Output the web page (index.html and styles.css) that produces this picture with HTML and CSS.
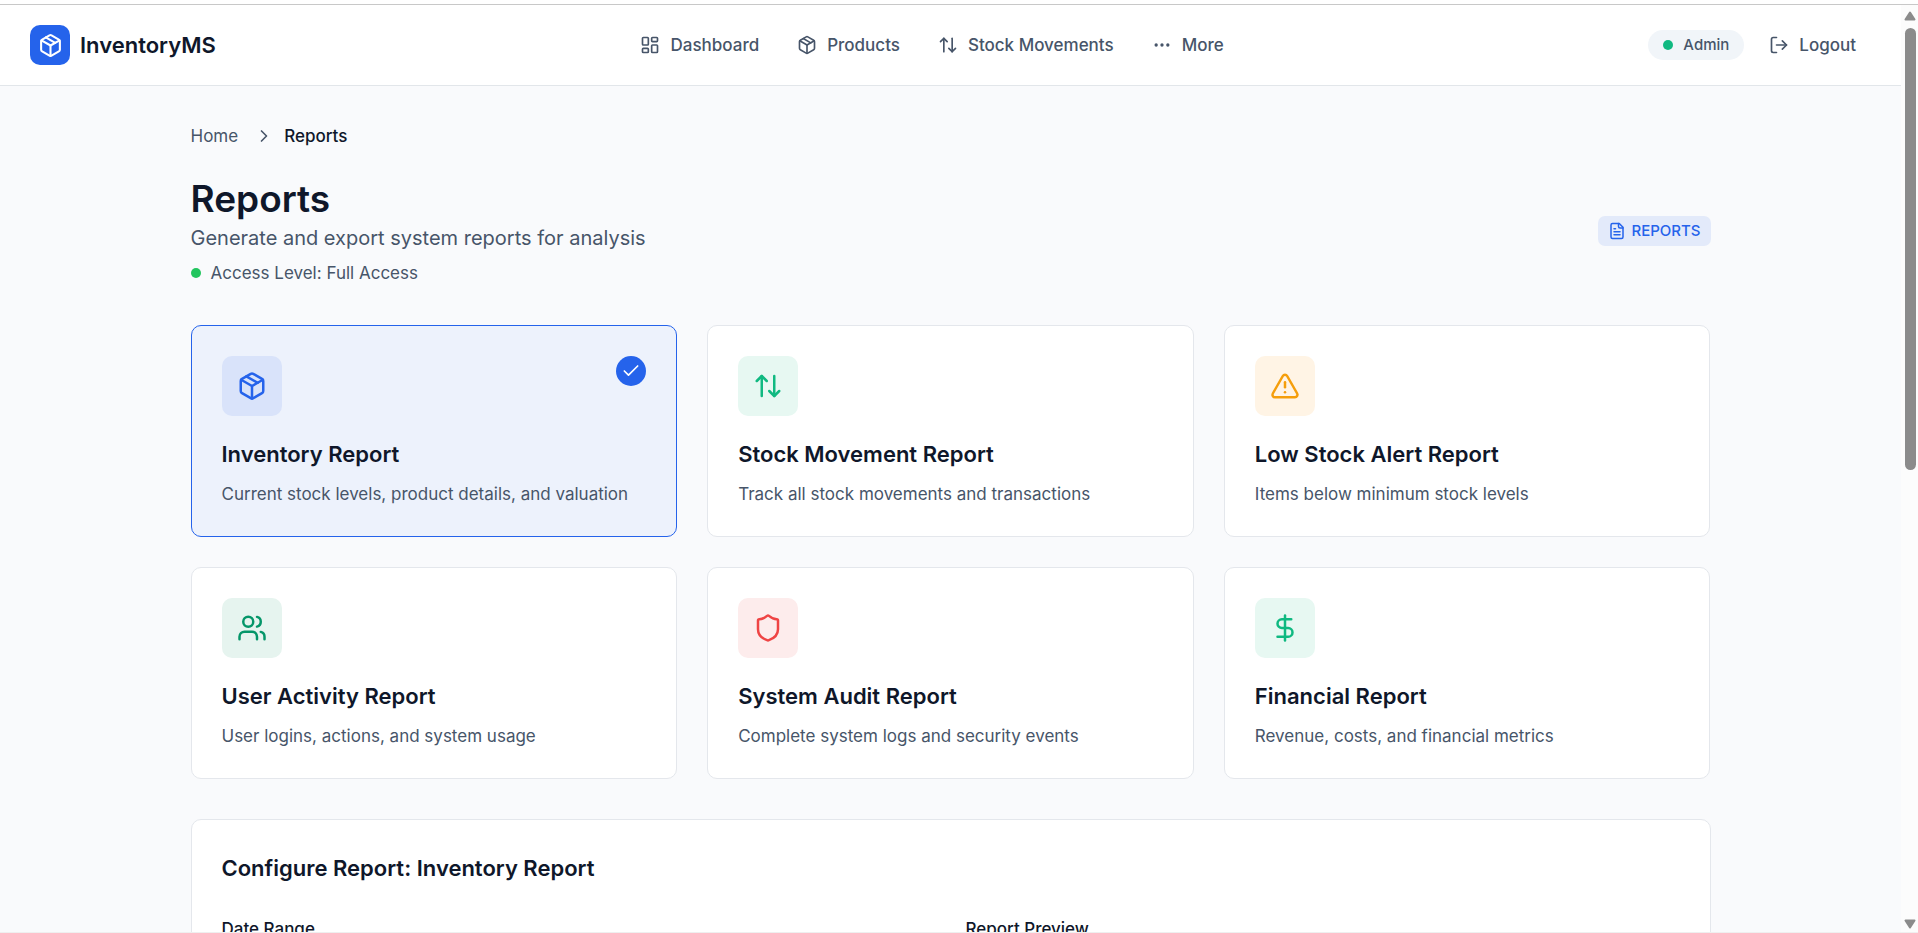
FILE: index.html
```html
<!DOCTYPE html>
<html lang="en">
<head>
<meta charset="utf-8">
<title>Reports - InventoryMS</title>
<link rel="stylesheet" href="styles.css">
</head>
<body>
<svg class="sprite" aria-hidden="true">
  <symbol id="package" viewBox="0 0 24 24"><path d="m7.5 4.27 9 5.15"/><path d="M21 8a2 2 0 0 0-1-1.73l-7-4a2 2 0 0 0-2 0l-7 4A2 2 0 0 0 3 8v8a2 2 0 0 0 1 1.73l7 4a2 2 0 0 0 2 0l7-4A2 2 0 0 0 21 16Z"/><path d="m3.3 7 8.7 5 8.7-5"/><path d="M12 22V12"/></symbol>
  <symbol id="dashboard" viewBox="0 0 24 24"><rect x="3" y="3" width="7" height="9" rx="1"/><rect x="14" y="3" width="7" height="5" rx="1"/><rect x="14" y="12" width="7" height="9" rx="1"/><rect x="3" y="16" width="7" height="5" rx="1"/></symbol>
  <symbol id="updown" viewBox="0 0 24 24"><path d="m3 8 4-4 4 4"/><path d="M7 4v16"/><path d="m21 16-4 4-4-4"/><path d="M17 20V4"/></symbol>
  <symbol id="more" viewBox="0 0 24 24"><circle cx="12" cy="12" r="1"/><circle cx="19" cy="12" r="1"/><circle cx="5" cy="12" r="1"/></symbol>
  <symbol id="logout" viewBox="0 0 24 24"><path d="M9 21H5a2 2 0 0 1-2-2V5a2 2 0 0 1 2-2h4"/><path d="m16 17 5-5-5-5"/><path d="M21 12H9"/></symbol>
  <symbol id="chevron" viewBox="0 0 24 24"><path d="m9 18 6-6-6-6"/></symbol>
  <symbol id="file" viewBox="0 0 24 24"><path d="M15 2H6a2 2 0 0 0-2 2v16a2 2 0 0 0 2 2h12a2 2 0 0 0 2-2V7Z"/><path d="M14 2v4a2 2 0 0 0 2 2h4"/><path d="M10 9H8"/><path d="M16 13H8"/><path d="M16 17H8"/></symbol>
  <symbol id="check" viewBox="0 0 24 24"><path d="M20 6 9 17l-5-5"/></symbol>
  <symbol id="warning" viewBox="0 0 24 24"><path d="m21.73 18-8-14a2 2 0 0 0-3.48 0l-8 14A2 2 0 0 0 4 21h16a2 2 0 0 0 1.73-3"/><path d="M12 9v4"/><path d="M12 17h.01"/></symbol>
  <symbol id="users" viewBox="0 0 24 24"><path d="M16 21v-2a4 4 0 0 0-4-4H6a4 4 0 0 0-4 4v2"/><circle cx="9" cy="7" r="4"/><path d="M22 21v-2a4 4 0 0 0-3-3.87"/><path d="M16 3.13a4 4 0 0 1 0 7.75"/></symbol>
  <symbol id="shield" viewBox="0 0 24 24"><path d="M20 13c0 5-3.5 7.5-7.66 8.95a1 1 0 0 1-.67-.01C7.5 20.5 4 18 4 13V6a1 1 0 0 1 1-1c2 0 4.5-1.2 6.24-2.72a1.17 1.17 0 0 1 1.52 0C14.51 3.81 17 5 19 5a1 1 0 0 1 1 1z"/></symbol>
  <symbol id="dollar" viewBox="0 0 24 24"><path d="M12 2v20"/><path d="M17 5H9.500a3.500 3.500 0 0 0 0 7h5a3.500 3.500 0 0 1 0 7H6"/></symbol>
</svg>

<div class="window">
  <div class="page">
    <header class="topbar">
      <a class="brand" href="#"><span class="brand-mark"><svg class="icon icon-md"><use href="#package"/></svg></span>InventoryMS</a>
      <nav class="nav" aria-label="Main">
        <a class="nav-item" href="#"><svg class="icon icon-sm"><use href="#dashboard"/></svg>Dashboard</a>
        <a class="nav-item" href="#"><svg class="icon icon-sm"><use href="#package"/></svg>Products</a>
        <a class="nav-item" href="#"><svg class="icon icon-sm"><use href="#updown"/></svg>Stock Movements</a>
        <button class="nav-item" type="button"><svg class="icon icon-sm"><use href="#more"/></svg>More</button>
      </nav>
      <div class="account">
        <span class="role"><span class="dot dot-emerald"></span>Admin</span>
        <button class="nav-item" type="button"><svg class="icon icon-sm"><use href="#logout"/></svg>Logout</button>
      </div>
    </header>

    <main class="content">
      <nav class="crumbs" aria-label="Breadcrumb">
        <a class="crumb-link" href="#">Home</a>
        <svg class="icon icon-sm"><use href="#chevron"/></svg>
        <span class="crumb-current" aria-current="page">Reports</span>
      </nav>

      <div class="heading">
        <div>
          <h1 class="title">Reports</h1>
          <p class="subtitle">Generate and export system reports for analysis</p>
          <p class="access"><span class="dot dot-green"></span>Access Level: Full Access</p>
        </div>
        <span class="badge"><svg class="icon icon-xs"><use href="#file"/></svg>REPORTS</span>
      </div>

      <div class="cards">
        <button class="card card-selected" type="button" aria-pressed="true">
          <span class="card-top"><span class="tile tile-blue"><svg class="icon icon-lg"><use href="#package"/></svg></span><span class="tick"><svg class="icon icon-sm"><use href="#check"/></svg></span></span>
          <span class="card-title">Inventory Report</span>
          <span class="card-text">Current stock levels, product details, and valuation</span>
        </button>
        <button class="card" type="button" aria-pressed="false">
          <span class="card-top"><span class="tile tile-emerald"><svg class="icon icon-lg"><use href="#updown"/></svg></span></span>
          <span class="card-title">Stock Movement Report</span>
          <span class="card-text">Track all stock movements and transactions</span>
        </button>
        <button class="card" type="button" aria-pressed="false">
          <span class="card-top"><span class="tile tile-amber"><svg class="icon icon-lg"><use href="#warning"/></svg></span></span>
          <span class="card-title">Low Stock Alert Report</span>
          <span class="card-text">Items below minimum stock levels</span>
        </button>
        <button class="card" type="button" aria-pressed="false">
          <span class="card-top"><span class="tile tile-green"><svg class="icon icon-lg"><use href="#users"/></svg></span></span>
          <span class="card-title">User Activity Report</span>
          <span class="card-text">User logins, actions, and system usage</span>
        </button>
        <button class="card" type="button" aria-pressed="false">
          <span class="card-top"><span class="tile tile-red"><svg class="icon icon-lg"><use href="#shield"/></svg></span></span>
          <span class="card-title">System Audit Report</span>
          <span class="card-text">Complete system logs and security events</span>
        </button>
        <button class="card" type="button" aria-pressed="false">
          <span class="card-top"><span class="tile tile-emerald"><svg class="icon icon-lg"><use href="#dollar"/></svg></span></span>
          <span class="card-title">Financial Report</span>
          <span class="card-text">Revenue, costs, and financial metrics</span>
        </button>
      </div>

      <section class="panel">
        <h2 class="panel-title">Configure Report: Inventory Report</h2>
        <div class="panel-columns">
          <h3 class="panel-label">Date Range</h3>
          <h3 class="panel-label">Report Preview</h3>
        </div>
      </section>
    </main>
  </div>
  <div class="scrollbar" aria-hidden="true">
    <svg class="scroll-arrow" viewBox="0 0 12 10"><path d="M6 1.500 10.500 8.500h-9z"/></svg>
    <div class="scroll-track"><div class="scroll-thumb"></div></div>
    <svg class="scroll-arrow" viewBox="0 0 12 10"><path d="M6 8.500 1.500 1.500h9z"/></svg>
  </div>
</div>
</body>
</html>
```
FILE: styles.css
```css
* {
  box-sizing: border-box;
}

body {
  margin: 0;
  height: 100vh;
  display: flex;
  flex-direction: column;
  padding-top: 4px;
  overflow: hidden;
  background: #fff;
  color: #0f172a;
  font-family: Inter, "Liberation Sans", sans-serif;
  font-size: 17px;
  line-height: 26px;
}

h1, h2, h3, p {
  margin: 0;
}

a {
  color: inherit;
  text-decoration: none;
}

button {
  border: 0;
  background: none;
  color: inherit;
  font: inherit;
  text-align: left;
  cursor: pointer;
}

.sprite {
  display: none;
}

.icon {
  flex: none;
  fill: none;
  stroke: currentColor;
  stroke-width: 2;
  stroke-linecap: round;
  stroke-linejoin: round;
}

.icon-xs { width: 18px; height: 18px; }
.icon-sm { width: 20px; height: 20px; }
.icon-md { width: 25px; height: 25px; }
.icon-lg { width: 30px; height: 30px; }

.window {
  flex: 1;
  min-height: 0;
  display: flex;
  border-top: 1px solid #c8c8c8;
  border-bottom: 1px solid #efefef;
}

.page {
  flex: 1;
  min-width: 0;
  overflow: hidden;
  background: #f9fafc;
}

/* Top bar */

.topbar {
  display: flex;
  align-items: center;
  justify-content: space-between;
  padding: 20px 30px;
  border-bottom: 1px solid #e2e6ea;
  background: #fff;
}

.brand {
  display: flex;
  align-items: center;
  gap: 10px;
  font-size: 22px;
  font-weight: 600;
}

.brand-mark {
  display: grid;
  place-items: center;
  width: 40px;
  height: 40px;
  border-radius: 10px;
  background: #2563eb;
  color: #fff;
}

.nav {
  display: flex;
  gap: 8px;
}

.nav-item {
  display: flex;
  align-items: center;
  gap: 10px;
  padding: 7px 15px;
  color: #475569;
  font-weight: 500;
}

.account {
  display: flex;
  align-items: center;
  gap: 10px;
}

.role {
  display: flex;
  align-items: center;
  gap: 10px;
  padding: 2px 15px;
  border-radius: 15px;
  background: #f1f5f9;
  color: #475569;
  font-size: 15px;
  font-weight: 500;
}

.dot {
  flex: none;
  width: 10px;
  height: 10px;
  border-radius: 50%;
}

.dot-emerald { background: #10b981; }
.dot-green { background: #22c55e; }

/* Page heading */

.content {
  max-width: 1600px;
  margin: 0 auto;
  padding: 37px 40px;
}

.crumbs {
  display: flex;
  align-items: center;
  gap: 10px;
  margin-bottom: 27px;
  color: #475569;
}

.crumb-link {
  padding-right: 6px;
}

.crumb-current {
  color: #0f172a;
  font-weight: 500;
}

.heading {
  display: flex;
  align-items: center;
  justify-content: space-between;
  margin-bottom: 39px;
}

.title {
  font-size: 37px;
  font-weight: 600;
  line-height: 46px;
}

.subtitle {
  margin-bottom: 6px;
  color: #475569;
  font-size: 20px;
  line-height: 32px;
}

.access {
  display: flex;
  align-items: center;
  gap: 10px;
  color: #475569;
}

.badge {
  display: flex;
  align-items: center;
  gap: 5px;
  padding: 2px 10px;
  border-radius: 7px;
  background: #e3eafa;
  color: #2563eb;
  font-size: 15px;
  font-weight: 500;
}

/* Report cards */

.cards {
  display: grid;
  grid-template-columns: repeat(3, 1fr);
  gap: 30px;
  margin-bottom: 40px;
}

.card {
  display: flex;
  flex-direction: column;
  padding: 30px;
  border: 1px solid #e4e7ec;
  border-radius: 10px;
  background: #fff;
}

.card-selected {
  border-color: #2563eb;
  background: #edf2fc;
}

.card-top {
  display: flex;
  align-items: flex-start;
  justify-content: space-between;
  align-self: stretch;
  margin-bottom: 24px;
}

.tile {
  display: grid;
  place-items: center;
  width: 60px;
  height: 60px;
  border-radius: 10px;
}

.tile-blue { background: #d9e3fa; color: #2563eb; }
.tile-emerald { background: #e7f8f2; color: #10b981; }
.tile-amber { background: #fff4e5; color: #f59e0b; }
.tile-green { background: #e6f4ef; color: #059669; }
.tile-red { background: #fdecec; color: #ef4444; }

.tick {
  display: grid;
  place-items: center;
  width: 30px;
  height: 30px;
  border-radius: 50%;
  background: #2563eb;
  color: #fff;
}

.card-title {
  margin-bottom: 14px;
  font-size: 22px;
  font-weight: 600;
  line-height: 28px;
}

.card-text {
  color: #475569;
  line-height: 24px;
}

/* Report configuration */

.panel {
  padding: 30px;
  border: 1px solid #e4e7ec;
  border-radius: 10px;
  background: #fff;
}

.panel-title {
  margin-bottom: 30px;
  font-size: 22px;
  font-weight: 600;
  line-height: 36px;
}

.panel-columns {
  display: grid;
  grid-template-columns: 1fr 1fr;
  gap: 30px;
}

.panel-label {
  font-size: 17px;
  font-weight: 500;
}

/* Scrollbar */

.scrollbar {
  display: flex;
  flex-direction: column;
  align-items: center;
  width: 17px;
  padding: 6px 1px 3px 2px;
  background: #fcfcfc;
}

.scroll-arrow {
  width: 12px;
  height: 10px;
  fill: #8b8b8b;
  stroke: #8b8b8b;
  stroke-width: 2;
  stroke-linejoin: round;
}

.scroll-track {
  flex: 1;
  width: 11px;
  padding: 7px 0;
}

.scroll-thumb {
  height: 50%;
  border-radius: 6px;
  background: #8b8b8b;
}
```
